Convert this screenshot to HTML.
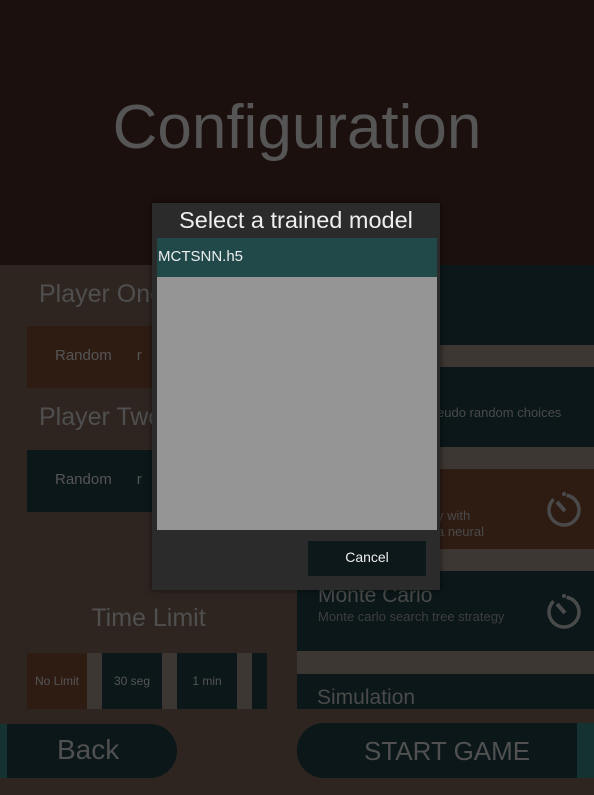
<!DOCTYPE html>
<html><head><style>
*{margin:0;padding:0;box-sizing:border-box}
body{width:594px;height:795px;background:#2f2520;position:relative;overflow:hidden;font-family:"Liberation Sans",sans-serif;color:#5a5a5a}
.a{position:absolute}
</style></head><body>
<div class="a" style="left:0;top:0;width:594px;height:265px;background:#1b100d"></div>
<div class="a" style="left:0;top:92px;width:594px;text-align:center;font-size:62px;color:#555">Configuration</div>

<div class="a" style="left:39px;top:280px;font-size:25px;color:#4f4f4f">Player One</div>
<div class="a" style="left:27px;top:326px;width:130px;height:62px;background:#2e1c13"></div>
<div class="a" style="left:55px;top:347px;font-size:15px;color:#555">Random &nbsp;&nbsp;&nbsp;&nbsp; r</div>
<div class="a" style="left:39px;top:403px;font-size:25px;color:#4f4f4f">Player Two</div>
<div class="a" style="left:27px;top:450px;width:130px;height:62px;background:#0b1719"></div>
<div class="a" style="left:55px;top:471px;font-size:15px;color:#555">Random &nbsp;&nbsp;&nbsp;&nbsp; r</div>

<div class="a" style="left:297px;top:265px;width:297px;height:444px;background:#3d3733"></div>
<div class="a" style="left:297px;top:265px;width:297px;height:80px;background:#0b1719"></div>
<div class="a" style="left:297px;top:367px;width:297px;height:80px;background:#0b1719"></div>
<div class="a" style="left:437px;top:405px;font-size:13px;color:#4a4a4a">eudo random choices</div>
<div class="a" style="left:297px;top:469px;width:297px;height:80px;background:#2e1c13"></div>
<div class="a" style="left:437px;top:508px;font-size:13px;color:#4a4a4a;line-height:16px">y with<br>a neural</div>
<div class="a" style="left:297px;top:571px;width:297px;height:80px;background:#0b1719"></div>
<div class="a" style="left:318px;top:584px;font-size:21px;color:#4a4a4a">Monte Carlo</div>
<div class="a" style="left:318px;top:609px;font-size:13px;color:#3f3f3f">Monte carlo search tree strategy</div>
<div class="a" style="left:297px;top:674px;width:297px;height:35px;background:#0b1719"></div>
<div class="a" style="left:317px;top:686px;font-size:21px;color:#4a4a4a">Simulation</div>
<svg class="a" style="left:545px;top:490px" width="40" height="40"><circle cx="19" cy="20" r="15" fill="none" stroke="#4a4a4a" stroke-width="3.5" stroke-dasharray="80 14" transform="rotate(-80 19 20)"/><path d="M12 12 L20 21" stroke="#4a4a4a" stroke-width="4"/><circle cx="19" cy="4" r="2" fill="#4a4a4a"/></svg>
<svg class="a" style="left:545px;top:592px" width="40" height="40"><circle cx="19" cy="20" r="15" fill="none" stroke="#4a4a4a" stroke-width="3.5" stroke-dasharray="80 14" transform="rotate(-80 19 20)"/><path d="M12 12 L20 21" stroke="#4a4a4a" stroke-width="4"/><circle cx="19" cy="4" r="2" fill="#4a4a4a"/></svg>

<div class="a" style="left:0;top:604px;width:297px;text-align:center;font-size:25px;color:#4f4f4f">Time Limit</div>
<div class="a" style="left:27px;top:653px;width:240px;height:56px;background:#3d3733"></div>
<div class="a" style="left:27px;top:653px;width:60px;height:56px;background:#2e1c13;font-size:12px;line-height:56px;text-align:center;color:#555">No Limit</div>
<div class="a" style="left:102px;top:653px;width:60px;height:56px;background:#0b1719;font-size:12px;line-height:56px;text-align:center;color:#555">30 seg</div>
<div class="a" style="left:177px;top:653px;width:60px;height:56px;background:#0b1719;font-size:12px;line-height:56px;text-align:center;color:#555">1 min</div>
<div class="a" style="left:252px;top:653px;width:15px;height:56px;background:#0b1719"></div>

<div class="a" style="left:0;top:724px;width:177px;height:54px;background:#0b1719;border-radius:0 27px 27px 0/0 27px 27px 0"></div>
<div class="a" style="left:0;top:724px;width:7px;height:54px;background:#143231"></div>
<div class="a" style="left:57px;top:734px;font-size:28px;color:#505050">Back</div>
<div class="a" style="left:297px;top:723px;width:290px;height:55px;background:#0b1719;border-radius:27px 0 0 27px"></div>
<div class="a" style="left:577px;top:723px;width:17px;height:55px;background:#143231"></div>
<div class="a" style="left:364px;top:736px;font-size:26px;color:#505050">START GAME</div>

<div class="a" style="left:152px;top:203px;width:288px;height:387px;background:#2b2b2b;box-shadow:0 0 6px rgba(0,0,0,.6)"></div>
<div class="a" style="left:152px;top:207px;width:288px;text-align:center;font-size:23.5px;color:#eee">Select a trained model</div>
<div class="a" style="left:157px;top:238px;width:280px;height:39px;background:#22494a;color:#eee;font-size:15px;line-height:37px;padding-left:1px">MCTSNN.h5</div>
<div class="a" style="left:157px;top:277px;width:280px;height:253px;background:#959595"></div>
<div class="a" style="left:308px;top:541px;width:118px;height:35px;background:#0c1819;color:#eee;font-size:14px;line-height:33px;text-align:center">Cancel</div>
</body></html>
